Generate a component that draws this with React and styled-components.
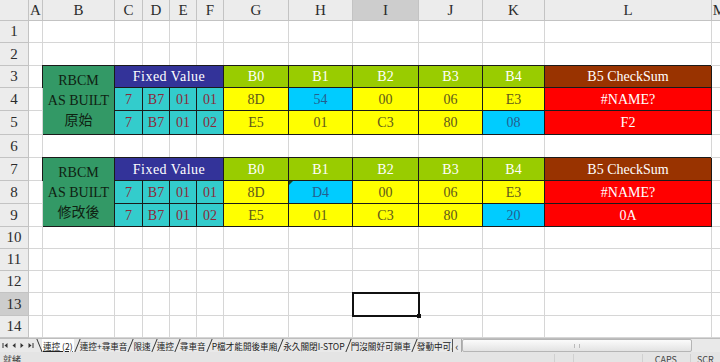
import React from "react";
import styled, { createGlobalStyle, css } from "styled-components";

const GlobalStyle = createGlobalStyle`
    html, body {
        margin: 0;
        padding: 0;
        width: 720px;
        height: 362px;
        overflow: hidden;
        background: #ffffff;
    }
`;

const LETTERS = ["A", "B", "C", "D", "E", "F", "G", "H", "I", "J", "K", "L", "M"];
const WIDTHS = [14, 72, 28, 27, 27, 27, 65, 64, 66, 64, 62, 167, 16];
const HEIGHTS = [22, 23, 22, 23, 24, 23, 23, 23, 23, 22, 22, 22, 23, 22];
const SEL = { row: 13, col: 8 };

const FILLS = {
    green: { bg: "#339966", fg: "#0f2212" },
    indigo: { bg: "#333399", fg: "#ffffff", wide: true },
    cyan: { bg: "#33cccc", fg: "#8a2a3a" },
    lime: { bg: "#99cc00", fg: "#ffffff" },
    yellow: { bg: "#ffff00", fg: "#5e581c" },
    sky: { bg: "#00ccff", fg: "#245f8f" },
    brown: { bg: "#993300", fg: "#ffffff" },
    red: { bg: "#ff0000", fg: "#ffffff" },
};

// one block of the checksum table, starting at sheet row r
function block(r, label, rows) {
    const out = [
        { r, c: 1, rs: 3, fill: "green", text: `RBCM\nAS BUILT\n${label}` },
        { r, c: 2, cs: 4, fill: "indigo", text: "Fixed Value" },
        { r, c: 6, fill: "lime", text: "B0" },
        { r, c: 7, fill: "lime", text: "B1" },
        { r, c: 8, fill: "lime", text: "B2" },
        { r, c: 9, fill: "lime", text: "B3" },
        { r, c: 10, fill: "lime", text: "B4" },
        { r, c: 11, fill: "brown", text: "B5 CheckSum" },
    ];
    rows.forEach((row, i) => {
        row.fixed.forEach((v, j) => out.push({ r: r + 1 + i, c: 2 + j, fill: "cyan", text: v }));
        row.bytes.forEach((v, j) =>
            out.push({
                r: r + 1 + i,
                c: 6 + j,
                fill: j === row.sky ? "sky" : "yellow",
                text: v,
                flag: row.flag === j,
            })
        );
        out.push({ r: r + 1 + i, c: 11, fill: "red", text: row.sum });
    });
    return out;
}

const CELLS = [
    ...block(3, "原始", [
        { fixed: ["7", "B7", "01", "01"], bytes: ["8D", "54", "00", "06", "E3"], sky: 1, sum: "#NAME?" },
        { fixed: ["7", "B7", "01", "02"], bytes: ["E5", "01", "C3", "80", "08"], sky: 4, sum: "F2" },
    ]),
    ...block(7, "修改後", [
        { fixed: ["7", "B7", "01", "01"], bytes: ["8D", "D4", "00", "06", "E3"], sky: 1, flag: 1, sum: "#NAME?" },
        { fixed: ["7", "B7", "01", "02"], bytes: ["E5", "01", "C3", "80", "20"], sky: 4, sum: "0A" },
    ]),
];

const TABS = [
    "連控 (2)",
    "連控+尋車音",
    "限速",
    "連控",
    "尋車音",
    "P檔才能開後車廂",
    "永久關閉I-STOP",
    "門沒關好可鎖車",
    "發動中可以開",
];

function buildGrid() {
    const byKey = {};
    const covered = {};
    CELLS.forEach((cell) => {
        byKey[`${cell.r},${cell.c}`] = cell;
        for (let dr = 0; dr < (cell.rs || 1); dr++) {
            for (let dc = 0; dc < (cell.cs || 1); dc++) {
                if (dr || dc) covered[`${cell.r + dr},${cell.c + dc}`] = true;
            }
        }
    });

    const items = [];
    items.push(<Corner key="corner" />);
    LETTERS.forEach((l, c) =>
        items.push(
            <ColHead key={`h${l}`} $active={c === SEL.col}>
                {l}
            </ColHead>
        )
    );
    HEIGHTS.forEach((_, i) => {
        const r = i + 1;
        items.push(
            <RowHead key={`r${r}`} $active={r === SEL.row}>
                {r}
            </RowHead>
        );
        LETTERS.forEach((_, c) => {
            const key = `${r},${c}`;
            if (covered[key]) return;
            const cell = byKey[key];
            if (!cell) {
                items.push(
                    <Cell key={key} $row={r + 1} $col={c + 2} $selected={r === SEL.row && c === SEL.col} />
                );
                return;
            }
            items.push(
                <Cell
                    key={key}
                    $row={r + 1}
                    $col={c + 2}
                    $rs={cell.rs}
                    $cs={cell.cs}
                    $fill={FILLS[cell.fill]}
                    $flag={cell.flag}
                    $multi={cell.rs > 1}
                >
                    {cell.text}
                </Cell>
            );
        });
    });
    return items;
}

function NavArrow({ dir, bar }) {
    return (
        <svg width="7" height="7" viewBox="0 0 7 7">
            {bar && <rect x={dir === "left" ? 0.5 : 5.5} y="1" width="1" height="5" fill="#333" />}
            {dir === "left" ? (
                <polygon points="5.5,1 2.5,3.5 5.5,6" fill="#333" />
            ) : (
                <polygon points="1.5,1 4.5,3.5 1.5,6" fill="#333" />
            )}
        </svg>
    );
}

export default function App() {
    return (
        <Window>
            <GlobalStyle />
            <Sheet>{buildGrid()}</Sheet>
            <TabBar>
                <NavButtons>
                    <NavArrow dir="left" bar />
                    <NavArrow dir="left" />
                    <NavArrow dir="right" />
                    <NavArrow dir="right" bar />
                </NavButtons>
                <Tabs>
                    <Slant $back />
                    {TABS.map((t, i) => (
                        <React.Fragment key={t}>
                            <Tab $active={i === 0}>{t}</Tab>
                            {i < TABS.length - 1 && <Slant />}
                        </React.Fragment>
                    ))}
                </Tabs>
                <Scroll>
                    <ScrollButton>‹</ScrollButton>
                    <ScrollThumb>
                        <Grip />
                    </ScrollThumb>
                </Scroll>
            </TabBar>
            <StatusBar>
                <StatusText>就緒</StatusText>
                <StatusPanel $w={19} />
                <StatusPanel $w={69} />
                <StatusPanel $w={48} $right>
                    CAPS
                </StatusPanel>
                <StatusPanel $w={30}>SCR</StatusPanel>
            </StatusBar>
        </Window>
    );
}

const Window = styled.div`
    width: 720px;
    height: 362px;
    display: flex;
    flex-direction: column;
    overflow: hidden;
    font-family: "Liberation Serif", "Noto Sans CJK TC", serif;
`;

const Sheet = styled.div`
    display: grid;
    grid-template-columns: 29px ${WIDTHS.map((w) => `${w}px`).join(" ")};
    grid-template-rows: 21px ${HEIGHTS.map((h) => `${h}px`).join(" ")};
    flex: none;
`;

const headBase = css`
    box-sizing: border-box;
    display: flex;
    align-items: center;
    justify-content: center;
    background: ${(p) => (p.$active ? "#cdcdcd" : "#ececec")};
    border-right: 1px solid #c3c3c3;
    border-bottom: 1px solid #c3c3c3;
    color: #2b2b2b;
    font-size: 15px;
`;

const Corner = styled.div`
    ${headBase}
`;

const ColHead = styled.div`
    ${headBase}
    padding-top: 1px;
`;

const RowHead = styled.div`
    ${headBase}
`;

const Cell = styled.div`
    position: relative;
    box-sizing: border-box;
    grid-row: ${(p) => p.$row} / span ${(p) => p.$rs || 1};
    grid-column: ${(p) => p.$col} / span ${(p) => p.$cs || 1};
    display: flex;
    align-items: center;
    justify-content: center;
    text-align: center;
    font-size: 14px;
    white-space: pre-line;
    line-height: ${(p) => (p.$multi ? "20px" : "16px")};
    padding-top: 1px;
    border-right: 1px solid #d6d6d6;
    border-bottom: 1px solid #d6d6d6;

    ${(p) =>
        p.$fill &&
        css`
            background: ${p.$fill.bg};
            color: ${p.$fill.fg};
            letter-spacing: ${p.$fill.wide ? "0.5px" : "0"};
            border-color: #1a1a1a;
            box-shadow: -1px -1px 0 #1a1a1a;
        `}

    ${(p) =>
        p.$flag &&
        css`
            &::before {
                content: "";
                position: absolute;
                left: 0;
                top: 0;
                border-top: 4px solid #1f4a1f;
                border-right: 4px solid transparent;
            }
        `}

    ${(p) =>
        p.$selected &&
        css`
            outline: 2px solid #111;
            outline-offset: -1px;
            z-index: 1;

            &::after {
                content: "";
                position: absolute;
                right: -3px;
                bottom: -3px;
                width: 4px;
                height: 4px;
                background: #111;
            }
        `}
`;

const TabBar = styled.div`
    height: 14px;
    flex: none;
    display: flex;
    align-items: stretch;
    background: #e9e9e9;
    border-top: 1px solid #bdbdbd;
    box-sizing: border-box;
    font-family: "Noto Sans CJK TC", "Liberation Sans", sans-serif;
    font-size: 8.6px;
    color: #222;
`;

const NavButtons = styled.div`
    width: 36px;
    flex: none;
    display: flex;
    align-items: center;
    justify-content: space-around;
    padding: 0 1px;
    box-sizing: border-box;
`;

const Tabs = styled.div`
    display: flex;
    align-items: center;
    width: 416px;
    flex: none;
    overflow: hidden;
    white-space: nowrap;
    line-height: 12px;
`;

const Tab = styled.span`
    padding: 0 ${(p) => (p.$active ? "1px" : "0")};
    background: ${(p) => (p.$active ? "#ffffff" : "transparent")};
    text-decoration: ${(p) => (p.$active ? "underline" : "none")};
    height: 13px;
    display: flex;
    align-items: center;
    flex: none;
`;

const Slant = styled.span`
    width: 6px;
    height: 13px;
    flex: none;
    position: relative;

    &::before {
        content: "";
        position: absolute;
        left: 3px;
        top: 0;
        height: 13px;
        border-left: 1px solid #333;
        transform: skewX(${(p) => (p.$back ? "22deg" : "-22deg")});
    }
`;

const Scroll = styled.div`
    flex: 1;
    display: flex;
    align-items: stretch;
    border-left: 1px solid #555;
    padding-right: 28px;
`;

const ScrollButton = styled.div`
    width: 8px;
    display: flex;
    align-items: center;
    justify-content: center;
    font-size: 11px;
    color: #333;
    border-right: 1px solid #aaa;
`;

const ScrollThumb = styled.div`
    flex: 1;
    display: flex;
    align-items: center;
    justify-content: center;
    background: linear-gradient(#fbfbfb, #e3e3e3);
    border: 1px solid #b5b5b5;
    border-radius: 2px;
`;

const Grip = styled.div`
    width: 4px;
    height: 4px;
    border-left: 1px solid #bbb;
    border-right: 1px solid #bbb;
`;

const StatusBar = styled.div`
    height: 20px;
    flex: none;
    display: flex;
    align-items: flex-start;
    background: #e4e4e4;
    font-family: "Noto Sans CJK TC", "Liberation Sans", sans-serif;
    font-size: 9px;
    line-height: 11px;
    color: #444;
    padding-top: 2px;
    box-sizing: border-box;
`;

const StatusText = styled.div`
    padding-left: 3px;
    flex: 1;
`;

const StatusPanel = styled.div`
    width: ${(p) => p.$w}px;
    flex: none;
    border-left: 1px solid #d0d0d0;
    height: 14px;
    display: flex;
    justify-content: ${(p) => (p.$right ? "flex-end" : "flex-start")};
    padding: 0 ${(p) => (p.$right ? "13px" : "0")} 0 ${(p) => (p.$right ? "0" : "6px")};
    box-sizing: border-box;
`;
